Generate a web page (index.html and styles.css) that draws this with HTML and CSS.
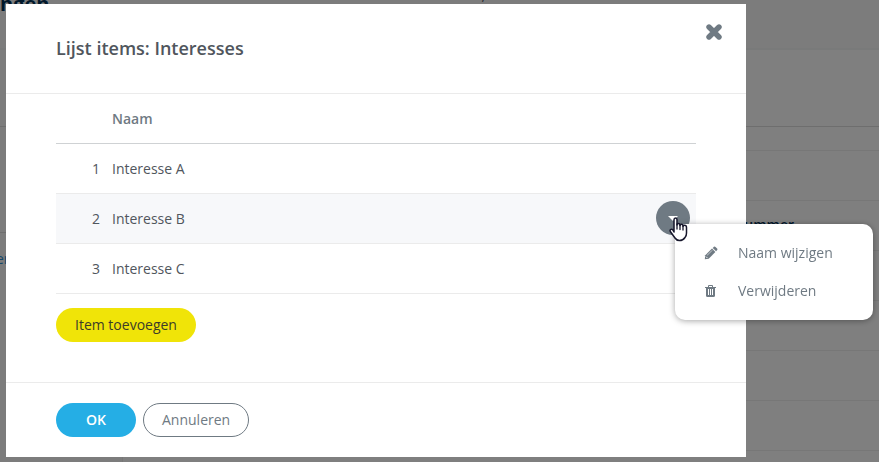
FILE: index.html
```html
<!DOCTYPE html>
<html lang="nl">
<head>
    <meta charset="UTF-8">
    <meta name="viewport" content="width=device-width, initial-scale=1.0">
    <title>Lijst items: Interesses</title>
    <link rel="stylesheet" href="styles.css">
</head>
<body>
    <div class="page" aria-hidden="true">
        <div class="page-top">
            <span class="page-title">ngen</span>
            <span class="page-note">,</span>
        </div>
        <div class="page-body">
            <div class="side">
                <div class="side-head"></div>
                <div class="side-block"></div>
                <div class="side-link">er</div>
            </div>
            <div class="panel">
                <div class="panel-head"></div>
                <div class="panel-row small"></div>
                <div class="panel-row"></div>
                <div class="panel-row">Nummer</div>
                <div class="panel-row"></div>
                <div class="panel-row"></div>
                <div class="panel-row"></div>
                <div class="panel-row"></div>
            </div>
        </div>
    </div>

    <div class="overlay">
        <div class="modal" role="dialog" aria-labelledby="modal-title">
            <div class="modal-header">
                <h1 id="modal-title">Lijst items: Interesses</h1>
                <button class="close" type="button" aria-label="Sluiten">
                    <svg width="16" height="16" viewBox="0 0 16 16"><path d="M3 3L13 13M13 3L3 13" stroke="currentColor" stroke-width="5.4" stroke-linecap="round"/></svg>
                </button>
            </div>

            <div class="modal-body">
                <table>
                    <thead>
                        <tr><th class="num"></th><th>Naam</th><th class="action"></th></tr>
                    </thead>
                    <tbody>
                        <tr><td class="num">1</td><td>Interesse A</td><td class="action"></td></tr>
                        <tr class="active">
                            <td class="num">2</td>
                            <td>Interesse B</td>
                            <td class="action">
                                <div class="dropdown">
                                    <button class="toggle" type="button" aria-label="Acties">
                                        <svg width="10" height="5" viewBox="0 0 10 5"><path d="M0 0H10L5 5Z" fill="#fff"/></svg>
                                    </button>
                                    <div class="menu">
                                        <button type="button">
                                            <svg width="14" height="14" viewBox="0 0 14 14" fill="currentColor">
                                                <path d="M.8 13.200L1.300 9.300L8 2.600L11.400 6L4.700 12.700Z"/>
                                                <path d="M8.700 1.900L9.900 .8Q10.700 .2 11.500 .9L13.100 2.500Q13.800 3.300 13.200 4.100L12.100 5.300Z"/>
                                                <path d="M3.200 9.300L8.200 4.300" stroke="#fff" stroke-width=".6" fill="none"/>
                                                <path d="M2 10.600L3.400 12" stroke="#fff" stroke-width=".9" fill="none"/>
                                            </svg>
                                            Naam wijzigen
                                        </button>
                                        <button type="button">
                                            <svg width="14" height="14" viewBox="0 0 14 14">
                                                <path d="M4.500 3V1.500H8.500V3M1 3.500H12" stroke="currentColor" fill="none"/>
                                                <path d="M2 3H11V11.500Q11 13 9.500 13H3.500Q2 13 2 11.500Z" fill="currentColor"/>
                                                <path d="M4.500 5V11M6.500 5V11M8.500 5V11" stroke="#fff" stroke-width="1"/>
                                            </svg>
                                            Verwijderen
                                        </button>
                                    </div>
                                    <svg class="pointer" width="19" height="25" viewBox="0 0 19 25">
                                        <path d="M5 15V2.800Q5 1 6.500 1Q8 1 8 2.800V8Q8.200 6.600 9.500 6.600Q11 6.600 11 8.500Q11.300 7.300 12.500 7.300Q14 7.300 14 9.300Q14.300 8.300 15.500 8.300Q17.500 8.300 17.500 10.500V16Q17.500 19 16 20.500Q14 23.500 10.500 23.500Q7.500 23.500 6 21L1.300 14.500Q.7 13.300 1.600 12.500Q2.800 11.700 3.900 12.900Z" fill="#fff" stroke="#17172c" stroke-width="1.500" stroke-linejoin="round"/>
                                        <path d="M8 7V12M11 8V12.500M14 9V13" stroke="#17172c" stroke-width="1.300" stroke-linecap="round"/>
                                    </svg>
                                </div>
                            </td>
                        </tr>
                        <tr><td class="num">3</td><td>Interesse C</td><td class="action"></td></tr>
                    </tbody>
                </table>
                <button class="btn btn-add" type="button">Item toevoegen</button>
            </div>

            <div class="modal-footer">
                <button class="btn btn-ok" type="button">OK</button>
                <button class="btn btn-cancel" type="button">Annuleren</button>
            </div>
        </div>
    </div>
</body>
</html>
```

FILE: styles.css
```css
* {
    box-sizing: border-box;
}
body {
    margin: 0;
    font-family: "Open Sans", sans-serif;
    font-size: 14px;
    line-height: 20px;
    color: #50565d;
    background: #f8f8f8;
    overflow: hidden;
}
button {
    font: inherit;
    cursor: pointer;
}

/* page behind the dialog */
.page {
    display: flex;
    flex-direction: column;
    height: 100vh;
    overflow: hidden;
}
.page-top {
    display: flex;
    justify-content: space-between;
    height: 50px;
    flex: none;
    padding-right: 394px;
    border-bottom: 2px solid #f2f4f4;
}
.page-title {
    margin-top: -10px;
    font-size: 20px;
    line-height: 28px;
    font-weight: 700;
    color: #003056;
}
.page-note {
    margin-top: -15px;
}
.page-body {
    display: flex;
    flex: 1;
}
.side {
    width: 123px;
    border-right: 1px solid #eee;
}
.side-head {
    height: 77px;
    border-bottom: 1px solid #dcdcdc;
}
.side-block {
    height: 106px;
    border-bottom: 1px solid #dcdcdc;
}
.side-link {
    margin: 16px 0 0 -4px;
    color: #2a8fd0;
}
.panel {
    flex: 1;
    background: #fff;
}
.panel-head {
    height: 77px;
    border-bottom: 1px solid #dcdcdc;
}
.panel-row {
    height: 50px;
    padding: 14px 85px;
    border-bottom: 1px solid #eee;
    text-align: right;
    font-weight: 600;
    color: #003056;
}
.panel-row.small {
    height: 24px;
    padding: 0;
}

/* dialog */
.overlay {
    position: fixed;
    inset: 0;
    padding: 4px 133px 5px 6px;
    background: rgba(0, 0, 0, 0.5);
}
.modal {
    background: #fff;
}
.modal-header {
    display: flex;
    justify-content: space-between;
    align-items: flex-start;
    padding: 20px 24px 20px 50px;
    border-bottom: 1px solid #ebebeb;
}
h1 {
    margin: 0;
    padding: 12px 0;
    font-size: 18px;
    line-height: 25px;
    font-weight: 600;
}
.close {
    display: flex;
    padding: 0;
    border: 0;
    background: none;
    color: #6f7a83;
}
.modal-body {
    padding: 0 50px 40px;
}
table {
    width: 100%;
    margin-bottom: 14px;
    border-collapse: separate;
    border-spacing: 0;
}
th,
td {
    height: 50px;
    padding: 0;
    border-bottom: 1px solid #ebebeb;
    text-align: left;
}
th {
    border-bottom-color: #cfd2d4;
    font-weight: 600;
    color: #6f7a83;
}
.num {
    width: 56px;
    padding-right: 12px;
    text-align: right;
}
.action {
    width: 40px;
    padding-bottom: 1px;
}
.active td {
    background: #f7f8fa;
}
.dropdown {
    position: relative;
    width: 34px;
}
.toggle {
    display: flex;
    align-items: center;
    justify-content: center;
    width: 34px;
    height: 34px;
    padding: 0;
    border: 0;
    border-radius: 50%;
    background: #6f7a83;
}
.menu {
    position: absolute;
    top: 23px;
    left: 19px;
    z-index: 1;
    width: 198px;
    padding: 10px 0;
    border-radius: 10px;
    background: #fff;
    box-shadow: 0 1px 6px rgba(0, 0, 0, 0.35);
}
.menu button {
    display: flex;
    align-items: center;
    gap: 20px;
    width: 100%;
    height: 38px;
    padding: 0 29px;
    border: 0;
    background: none;
    color: #6f7a83;
}
.pointer {
    position: absolute;
    top: 16px;
    left: 13px;
    z-index: 2;
}
.btn {
    height: 34px;
    padding: 0 18px;
    border: 1px solid transparent;
    border-radius: 17px;
}
.btn-add {
    background: #f0e408;
    color: #3c3c28;
}
.modal-footer {
    display: flex;
    gap: 7px;
    padding: 20px 50px;
    border-top: 1px solid #ebebeb;
}
.btn-ok {
    min-width: 80px;
    background: #25aee5;
    font-weight: 600;
    color: #fff;
}
.btn-cancel {
    border-color: #6f7a83;
    background: #fff;
    color: #6f7a83;
}
```
